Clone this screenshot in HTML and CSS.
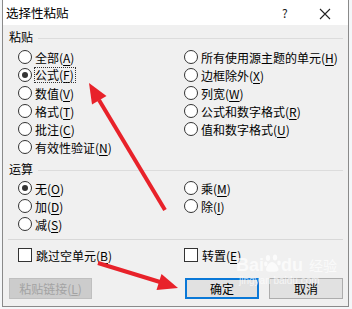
FILE: index.html
```html
<!DOCTYPE html>
<html lang="zh-CN">
<head>
    <meta charset="UTF-8">
    <title>选择性粘贴</title>
    <link rel="stylesheet" href="styles.css">
</head>
<body>
    <div class="dialog">
        <!-- Title bar -->
        <div class="titlebar">
            <span class="title">选择性粘贴</span>
            <span class="help">?</span>
            <span class="close">
                <svg width="12" height="12" viewBox="0 0 12 12"><path d="M1 1L11 11M11 1L1 11" stroke="#222" stroke-width="1.1"/></svg>
            </span>
        </div>

        <div class="client">
            <!-- Paste group -->
            <div class="group-head"><span>粘贴</span><i class="rule"></i></div>
            <div class="options paste">
                <label class="opt"><span class="radio"></span>全部(<u>A</u>)</label>
                <label class="opt"><span class="radio"></span>所有使用源主题的单元(<u>H</u>)</label>
                <label class="opt"><span class="radio on"></span><span class="focus">公式(<u>F</u>)</span></label>
                <label class="opt"><span class="radio"></span>边框除外(<u>X</u>)</label>
                <label class="opt"><span class="radio"></span>数值(<u>V</u>)</label>
                <label class="opt"><span class="radio"></span>列宽(<u>W</u>)</label>
                <label class="opt"><span class="radio"></span>格式(<u>T</u>)</label>
                <label class="opt"><span class="radio"></span>公式和数字格式(<u>R</u>)</label>
                <label class="opt"><span class="radio"></span>批注(<u>C</u>)</label>
                <label class="opt"><span class="radio"></span>值和数字格式(<u>U</u>)</label>
                <label class="opt"><span class="radio"></span>有效性验证(<u>N</u>)</label>
            </div>

            <!-- Operation group -->
            <div class="group-head op-head"><span>运算</span><i class="rule"></i></div>
            <div class="options ops">
                <label class="opt"><span class="radio on"></span>无(<u>O</u>)</label>
                <label class="opt"><span class="radio"></span>乘(<u>M</u>)</label>
                <label class="opt"><span class="radio"></span>加(<u>D</u>)</label>
                <label class="opt"><span class="radio"></span>除(<u>I</u>)</label>
                <label class="opt"><span class="radio"></span>减(<u>S</u>)</label>
            </div>

            <div class="separator"></div>

            <div class="options checks">
                <label class="opt"><span class="check"></span>跳过空单元(<u>B</u>)</label>
                <label class="opt"><span class="check"></span>转置(<u>E</u>)</label>
            </div>

            <div class="buttons">
                <button class="btn link" disabled>粘贴链接(<u>L</u>)</button>
                <span class="spacer"></span>
                <button class="btn ok">确定</button>
                <button class="btn">取消</button>
            </div>
        </div>

        <!-- faint watermark -->
        <div class="watermark">
            <div class="wm-logo">
                <span>Bai</span>
                <svg class="paw" width="17" height="18" viewBox="0 0 17 18">
                    <ellipse cx="4" cy="4" rx="2.2" ry="3"/>
                    <ellipse cx="11" cy="3.5" rx="2.2" ry="3"/>
                    <ellipse cx="1.8" cy="10" rx="1.8" ry="2.4"/>
                    <ellipse cx="15" cy="9" rx="1.8" ry="2.4"/>
                    <path d="M8 8c-3 0-6 5-6 7.5 0 2 2 2.3 6 2.3s6.5-.3 6.5-2.3C14.5 13 11 8 8 8z"/>
                </svg>
                <span>du</span>
                <span class="wm-cn">经验</span>
            </div>
            <span class="wm-url">jingyan baidu.com</span>
        </div>
    </div>

    <!-- red annotation arrows -->
    <svg class="arrows" width="352" height="309" viewBox="0 0 352 309">
        <line x1="165" y1="210" x2="99" y2="100" stroke="#e8222a" stroke-width="4"/>
        <polygon points="89,83 106.5,96 92,104.5" fill="#e8222a"/>
        <line x1="98" y1="263" x2="160" y2="282" stroke="#e8222a" stroke-width="4"/>
        <polygon points="178,288 161.5,274 156.5,290" fill="#e8222a"/>
    </svg>
</body>
</html>
```

FILE: styles.css
```css
body {
    margin: 0;
    width: 352px;
    height: 309px;
    overflow: hidden;
    position: relative;
    background: #f4f6f8;
    font-family: "Noto Sans CJK SC", "Liberation Sans", sans-serif;
    font-size: 12px;
    color: #000;
}

.dialog {
    position: relative;
    margin-left: 2px;
    width: 345px;
    height: 306px;
    border: 1px solid #8a8a8a;
    border-top: none;
    background: #f0f0f0;
    display: flex;
    flex-direction: column;
}

/* Title bar */
.titlebar {
    height: 25px;
    background: #fff;
    display: flex;
    align-items: center;
    padding-left: 3px;
}
.title {
    font-size: 12.5px;
    flex-grow: 1;
}
.help {
    width: 20px;
    font-size: 12px;
    color: #222;
}
.close {
    width: 46px;
    display: flex;
    justify-content: center;
    padding-top: 2px;
}

.client {
    flex-grow: 1;
    padding: 4px 5px 0 0;
    display: flex;
    flex-direction: column;
}

/* Group headers */
.group-head {
    display: flex;
    align-items: center;
    height: 16px;
    padding-left: 6px;
}
.group-head span {
    line-height: 16px;
}
.group-head .rule {
    flex-grow: 1;
    height: 1px;
    background: #dcdcdc;
    margin-left: 5px;
    margin-top: 2px;
}
.op-head {
    margin-top: 5px;
}

/* Radio / checkbox grid */
.options {
    display: grid;
    grid-template-columns: 166px 1fr;
    padding-left: 15px;
}
.paste {
    margin-top: 3px;
}
.ops {
    margin-top: 2px;
}
.opt {
    display: flex;
    align-items: center;
    height: 18px;
    white-space: nowrap;
}
.opt u {
    text-decoration: underline;
    text-underline-offset: 2px;
}
.radio {
    width: 12px;
    height: 12px;
    border: 1px solid #333;
    border-radius: 50%;
    background: #fff;
    margin-right: 3px;
    position: relative;
    flex-shrink: 0;
}
.radio.on::after {
    content: "";
    position: absolute;
    left: 3px;
    top: 3px;
    width: 6px;
    height: 6px;
    border-radius: 50%;
    background: #333;
}
.check {
    width: 12px;
    height: 12px;
    border: 1px solid #333;
    background: #fff;
    margin-right: 4px;
    flex-shrink: 0;
}
.focus {
    outline: 1px dotted #333;
    outline-offset: 0;
    line-height: 14px;
    padding-right: 1px;
}

.separator {
    height: 1px;
    background: #d8d8d8;
    margin: 6px 0 0 5px;
}
.checks {
    margin-top: 6px;
}

/* Buttons */
.buttons {
    display: flex;
    margin-top: 14px;
    padding-left: 6px;
    gap: 10px;
}
.spacer {
    flex-grow: 1;
}
.btn {
    height: 21px;
    width: 74px;
    border: 1px solid #adadad;
    background: #e1e1e1;
    font-family: inherit;
    font-size: 12px;
    padding: 0;
    color: #000;
}
.btn.link {
    width: 83px;
    background: #cccccc;
    border-color: #bfbfbf;
    color: #a3a3a3;
}
.btn.ok {
    border: 2px solid #0a78d7;
}

/* Watermark */
.watermark {
    position: absolute;
    left: 233px;
    top: 254px;
    display: flex;
    flex-direction: column;
    color: rgba(255, 255, 255, 0.7);
    white-space: nowrap;
    pointer-events: none;
}
.wm-logo {
    display: flex;
    align-items: flex-end;
    font-family: "Liberation Sans", sans-serif;
    font-size: 18px;
    font-weight: bold;
    line-height: 20px;
}
.paw {
    fill: rgba(255, 255, 255, 0.7);
    margin: 0 0 3px 0;
}
.wm-cn {
    font-family: "Noto Sans CJK SC", sans-serif;
    font-size: 14px;
    font-weight: normal;
    margin-left: 6px;
}
.wm-url {
    font-family: "Liberation Sans", sans-serif;
    font-size: 10px;
    line-height: 12px;
    margin-left: 3px;
}

.arrows {
    position: absolute;
    left: 0;
    top: 0;
    pointer-events: none;
}
```
